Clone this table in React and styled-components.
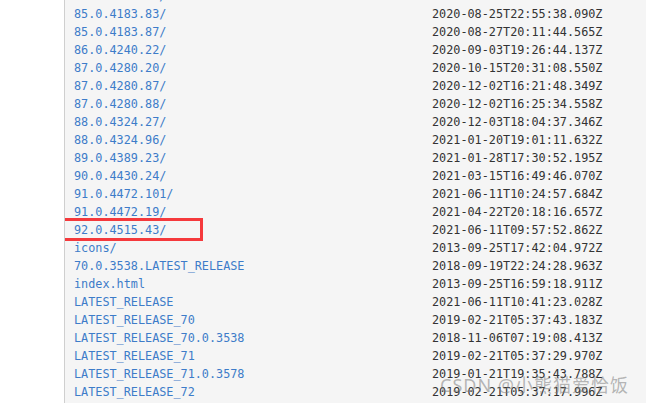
import React from "react";
import styled, { createGlobalStyle } from "styled-components";

const GlobalStyle = createGlobalStyle`
  html, body {
    margin: 0;
    padding: 0;
    background: #ffffff;
    overflow: hidden;
  }
`;

const rows = [
  ["84.0.4147.30/", "2020-07-16T17:02:14.881Z"],
  ["85.0.4183.83/", "2020-08-25T22:55:38.090Z"],
  ["85.0.4183.87/", "2020-08-27T20:11:44.565Z"],
  ["86.0.4240.22/", "2020-09-03T19:26:44.137Z"],
  ["87.0.4280.20/", "2020-10-15T20:31:08.550Z"],
  ["87.0.4280.87/", "2020-12-02T16:21:48.349Z"],
  ["87.0.4280.88/", "2020-12-02T16:25:34.558Z"],
  ["88.0.4324.27/", "2020-12-03T18:04:37.346Z"],
  ["88.0.4324.96/", "2021-01-20T19:01:11.632Z"],
  ["89.0.4389.23/", "2021-01-28T17:30:52.195Z"],
  ["90.0.4430.24/", "2021-03-15T16:49:46.070Z"],
  ["91.0.4472.101/", "2021-06-11T10:24:57.684Z"],
  ["91.0.4472.19/", "2021-04-22T20:18:16.657Z"],
  ["92.0.4515.43/", "2021-06-11T09:57:52.862Z", true],
  ["icons/", "2013-09-25T17:42:04.972Z"],
  ["70.0.3538.LATEST_RELEASE", "2018-09-19T22:24:28.963Z"],
  ["index.html", "2013-09-25T16:59:18.911Z"],
  ["LATEST_RELEASE", "2021-06-11T10:41:23.028Z"],
  ["LATEST_RELEASE_70", "2019-02-21T05:37:43.183Z"],
  ["LATEST_RELEASE_70.0.3538", "2018-11-06T07:19:08.413Z"],
  ["LATEST_RELEASE_71", "2019-02-21T05:37:29.970Z"],
  ["LATEST_RELEASE_71.0.3578", "2019-01-21T19:35:43.788Z"],
  ["LATEST_RELEASE_72", "2019-02-21T05:37:17.996Z"],
];

const Page = styled.div`
  display: flex;
  width: 646px;
  height: 403px;
  overflow: hidden;
  position: relative;
`;

const Gutter = styled.div`
  width: 64px;
  flex-shrink: 0;
  background: #ffffff;
  border-right: 1px solid #cfcfcf;
`;

const Panel = styled.div`
  flex: 1;
  background: #f5f5f5;
  padding-left: 9px;
  overflow: hidden;
`;

const List = styled.div`
  margin-top: -13px;
  display: flex;
  flex-direction: column;
`;

const Row = styled.div`
  display: grid;
  grid-template-columns: 358px auto;
  height: 18px;
  align-items: center;
  font-family: "DejaVu Sans Mono", "Liberation Mono", monospace;
  font-size: 11.8px;
  position: relative;
`;

const Name = styled.a`
  color: #3d7cc9;
  text-decoration: none;
  white-space: nowrap;
`;

const Date = styled.span`
  color: #333333;
  white-space: nowrap;
`;

const Highlight = styled.div`
  position: absolute;
  left: -12px;
  top: -3px;
  width: 135px;
  height: 17px;
  border: 3px solid #f5393c;
`;

const Watermark = styled.div`
  position: absolute;
  left: 440px;
  top: 371px;
  font-family: "Noto Sans", "Noto Sans CJK SC", sans-serif;
  font-size: 18px;
  letter-spacing: 1px;
  color: rgba(125, 125, 125, 0.55);
  white-space: nowrap;
`;

export default function App() {
  return (
    <>
      <GlobalStyle />
      <Page>
        <Gutter />
        <Panel>
          <List>
            {rows.map(([name, date, marked]) => (
              <Row key={name}>
                <Name href="#">{name}</Name>
                <Date>{date}</Date>
                {marked && <Highlight />}
              </Row>
            ))}
          </List>
        </Panel>
        <Watermark>CSDN @小熊猫爱恰饭</Watermark>
      </Page>
    </>
  );
}
